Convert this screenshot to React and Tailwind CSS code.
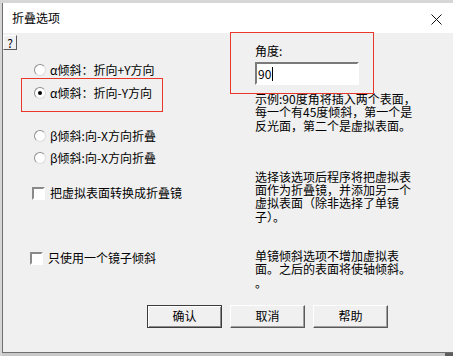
import React from "react";

const FONT = { fontFamily: '"Noto Sans CJK SC", "Noto Sans", sans-serif' };

function Radio({ checked }) {
  return (
    <span className="relative flex h-[12px] w-[12px] shrink-0 items-center justify-center rounded-full border border-[#8f8f8f] border-b-[#dcdcdc] border-r-[#dcdcdc] bg-white">
      {checked && <span className="h-[4px] w-[4px] rounded-full bg-black" />}
    </span>
  );
}

function Check() {
  return (
    <span className="flex h-[13px] w-[13px] shrink-0 border-2 border-t-[#8a8a8a] border-l-[#8a8a8a] border-b-[#ffffff] border-r-[#ffffff] bg-white" />
  );
}

function Btn({ children, def }) {
  return (
    <div
      className={
        "flex h-[23px] w-[75px] items-center justify-center bg-[#f0f0f0] text-[12px] text-black " +
        (def
          ? "border border-[#3c3c3c] shadow-[inset_1px_1px_0_#ffffff,inset_-1px_-1px_0_#8a8a8a]"
          : "border border-t-[#ffffff] border-l-[#ffffff] border-b-[#5a5a5a] border-r-[#5a5a5a] shadow-[inset_-1px_-1px_0_#a0a0a0]")
      }
    >
      {children}
    </div>
  );
}

export default function App() {
  return (
    <div
      className="flex h-[356px] w-[453px] flex-col overflow-hidden bg-[#d6d6d6] pl-[2px] pt-[3px]"
      style={FONT}
    >
      <div className="flex flex-col border-b border-l border-[#6f6f6f] bg-white">
        {/* title bar */}
        <div className="flex h-[30px] items-center justify-between bg-white pl-[9px] pr-[11px]">
          <span className="text-[12px] leading-[14px] text-black">折叠选项</span>
          <svg width="11" height="11" viewBox="0 0 11 11" className="mt-[2px]">
            <path d="M0.5 0.5 L10.5 10.5 M10.5 0.5 L0.5 10.5" stroke="#111" strokeWidth="1" />
          </svg>
        </div>

        {/* client area */}
        <div className="relative h-[319px] bg-[#f0f0f0] text-[12px] text-black">
          {/* help button */}
          <div className="absolute left-0 top-[2px] flex h-[15px] w-[14px] items-center justify-center border border-t-[#ffffff] border-l-[#ffffff] border-b-[#5a5a5a] border-r-[#5a5a5a] bg-[#f0f0f0] text-[12px] leading-none">
            ?
          </div>

          {/* annotation boxes */}
          <div className="pointer-events-none absolute left-[227px] top-[-1px] z-10 h-[62px] w-[144px] border border-[#e8382a]" />
          <div className="pointer-events-none absolute left-[18px] top-[45px] z-10 h-[34px] w-[142px] border border-[#e8382a]" />

          <div className="flex">
            {/* left column */}
            <div className="flex w-[252px] flex-col">
              <div className="ml-[31px] mt-[29px] flex h-[16px] items-center gap-[4px]">
                <Radio />
                <span className="whitespace-nowrap leading-[16px]">α倾斜：折向+Y方向</span>
              </div>
              <div className="ml-[31px] mt-[7px] flex h-[16px] items-center gap-[4px]">
                <Radio checked />
                <span className="whitespace-nowrap leading-[16px]">α倾斜：折向-Y方向</span>
              </div>
              <div className="ml-[31px] mt-[27px] flex h-[16px] items-center gap-[4px]">
                <Radio />
                <span className="whitespace-nowrap leading-[16px]">β倾斜:向-X方向折叠</span>
              </div>
              <div className="ml-[31px] mt-[6px] flex h-[16px] items-center gap-[4px]">
                <Radio />
                <span className="whitespace-nowrap leading-[16px]">β倾斜:向-X方向折叠</span>
              </div>
              <div className="ml-[29px] mt-[19px] flex h-[16px] items-center gap-[5px]">
                <Check />
                <span className="whitespace-nowrap leading-[16px]">把虚拟表面转换成折叠镜</span>
              </div>
              <div className="ml-[27px] mt-[49px] flex h-[16px] items-center gap-[5px]">
                <Check />
                <span className="whitespace-nowrap leading-[16px]">只使用一个镜子倾斜</span>
              </div>
            </div>

            {/* right column */}
            <div className="flex flex-col">
              <div className="mt-[11px] leading-[13px]">角度:</div>
              <div className="mt-[5px] flex h-[23px] w-[104px] items-center border-2 border-t-[#7a7a7a] border-l-[#7a7a7a] border-b-[#ffffff] border-r-[#ffffff] bg-white pl-[1px]">
                <span className="leading-[14px]">90</span>
                <span className="ml-[1px] h-[14px] w-[1px] bg-black" />
              </div>
              <div className="mt-[7px] whitespace-nowrap leading-[13.3px]">
                <div>示例:90度角将插入两个表面，</div>
                <div>每一个有45度倾斜，第一个是</div>
                <div>反光面，第二个是虚拟表面。</div>
              </div>
              <div className="mt-[38px] whitespace-nowrap leading-[13.3px]">
                <div>选择该选项后程序将把虚拟表</div>
                <div>面作为折叠镜，并添加另一个</div>
                <div>虚拟表面（除非选择了单镜</div>
                <div>子）。</div>
              </div>
              <div className="mt-[26px] whitespace-nowrap leading-[13.3px]">
                <div>单镜倾斜选项不增加虚拟表</div>
                <div>面。之后的表面将使轴倾斜。</div>
                <div>。</div>
              </div>
            </div>
          </div>

          {/* buttons */}
          <div className="ml-[144px] mt-[16px] flex gap-[8px]">
            <Btn def>确认</Btn>
            <Btn>取消</Btn>
            <Btn>帮助</Btn>
          </div>
        </div>
      </div>
      <div className="flex h-[3px] flex-1">
        <div className="flex-1 bg-[#c9c9c9]" />
        <div className="w-[8px] bg-[#5e5e5e]" />
      </div>
    </div>
  );
}
